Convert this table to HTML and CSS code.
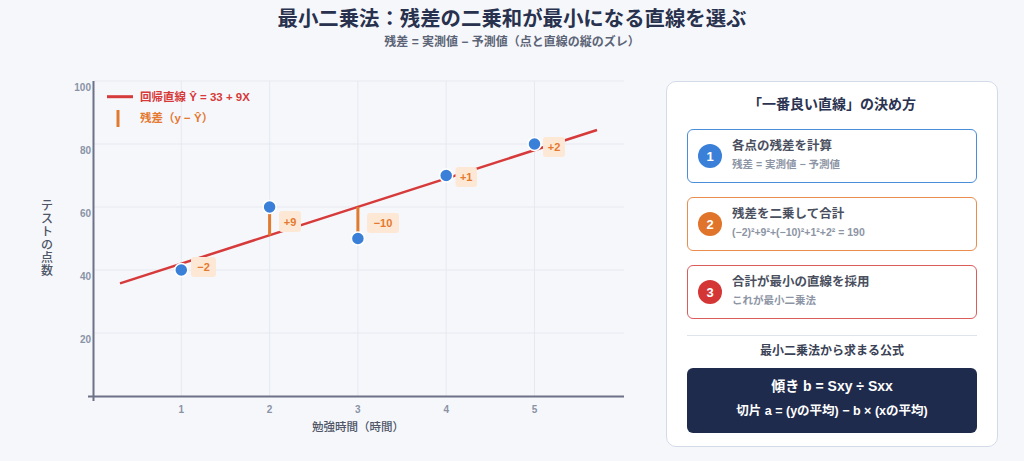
FILE: index.html
```html
<!DOCTYPE html>
<html lang="ja">
<head>
<meta charset="utf-8">
<title>最小二乗法</title>
<link rel="stylesheet" href="styles.css">
</head>
<body>
<header class="header">
  <h1 class="title">最小二乗法：残差の二乗和が最小になる直線を選ぶ</h1>
  <p class="subtitle">残差 = 実測値 − 予測値（点と直線の縦のズレ）</p>
</header>
<main class="main">
  <svg class="chart" width="626" height="390" viewBox="20 60 626 390" xmlns="http://www.w3.org/2000/svg">
    <g class="grid">
      <line x1="94" y1="81" x2="624" y2="81"/>
      <line x1="94" y1="144" x2="624" y2="144"/>
      <line x1="94" y1="207" x2="624" y2="207"/>
      <line x1="94" y1="270" x2="624" y2="270"/>
      <line x1="94" y1="333" x2="624" y2="333"/>
      <line x1="181.3" y1="81" x2="181.3" y2="396"/>
      <line x1="269.6" y1="81" x2="269.6" y2="396"/>
      <line x1="357.9" y1="81" x2="357.9" y2="396"/>
      <line x1="446.2" y1="81" x2="446.2" y2="396"/>
      <line x1="534.5" y1="81" x2="534.5" y2="396"/>
    </g>
    <g class="axis">
      <line x1="93.5" y1="81" x2="93.5" y2="401"/>
      <line x1="88" y1="396.5" x2="624" y2="396.5"/>
    </g>
    <g class="ytick">
      <text x="91" y="91">100</text>
      <text x="91" y="154">80</text>
      <text x="91" y="217">60</text>
      <text x="91" y="280">40</text>
      <text x="91" y="343">20</text>
    </g>
    <g class="xtick">
      <text x="181.3" y="413">1</text>
      <text x="269.6" y="413">2</text>
      <text x="357.9" y="413">3</text>
      <text x="446.2" y="413">4</text>
      <text x="534.5" y="413">5</text>
    </g>
    <text class="xtitle" x="358" y="430.5">勉強時間（時間）</text>
    <g class="ytitle">
      <text x="47" y="209.5">テ</text>
      <text x="47" y="222.5">ス</text>
      <text x="47" y="235.5">ト</text>
      <text x="47" y="248.5">の</text>
      <text x="47" y="261.5">点</text>
      <text x="47" y="274.5">数</text>
    </g>
    <line class="reg" x1="120" y1="283.4" x2="597" y2="130"/>
    <g class="resid">
      <line x1="181.3" y1="270" x2="181.3" y2="263.7"/>
      <line x1="269.6" y1="207" x2="269.6" y2="235.4"/>
      <line x1="357.9" y1="238.5" x2="357.9" y2="207"/>
      <line x1="446.2" y1="175.5" x2="446.2" y2="178.7"/>
      <line x1="534.5" y1="144" x2="534.5" y2="150"/>
    </g>
    <g class="dot">
      <circle cx="181.3" cy="270" r="6.5"/>
      <circle cx="269.6" cy="207" r="6.5"/>
      <circle cx="357.9" cy="238.5" r="6.5"/>
      <circle cx="446.2" cy="175.5" r="6.5"/>
      <circle cx="534.5" cy="144" r="6.5"/>
    </g>
    <g class="tag">
      <rect x="191" y="257" width="25" height="20" rx="3"/>
      <text x="203.5" y="271">−2</text>
      <rect x="279" y="211" width="22" height="21" rx="3"/>
      <text x="290" y="225.5">+9</text>
      <rect x="367" y="213" width="32" height="20" rx="3"/>
      <text x="383" y="227">−10</text>
      <rect x="455.5" y="167" width="21.5" height="20" rx="3"/>
      <text x="466.2" y="181">+1</text>
      <rect x="543" y="137" width="22" height="20" rx="3"/>
      <text x="554" y="151">+2</text>
    </g>
    <g class="legend">
      <line class="leg-reg" x1="107" y1="96.7" x2="133" y2="96.7"/>
      <text class="leg-reg-t" x="140" y="100.8">回帰直線 Ŷ = 33 + 9X</text>
      <line class="leg-res" x1="118" y1="110" x2="118" y2="127"/>
      <text class="leg-res-t" x="140" y="122">残差（y − Ŷ）</text>
    </g>
  </svg>

  <section class="panel">
    <h2 class="panel-title">「一番良い直線」の決め方</h2>
    <div class="steps">
      <div class="step step-blue">
        <div class="num">1</div>
        <div class="step-text">
          <div class="step-title">各点の残差を計算</div>
          <div class="step-sub">残差 = 実測値 − 予測値</div>
        </div>
      </div>
      <div class="step step-orange">
        <div class="num">2</div>
        <div class="step-text">
          <div class="step-title">残差を二乗して合計</div>
          <div class="step-sub">(−2)²+9²+(−10)²+1²+2² = 190</div>
        </div>
      </div>
      <div class="step step-red">
        <div class="num">3</div>
        <div class="step-text">
          <div class="step-title">合計が最小の直線を採用</div>
          <div class="step-sub">これが最小二乗法</div>
        </div>
      </div>
    </div>
    <div class="divider"></div>
    <h3 class="formula-title">最小二乗法から求まる公式</h3>
    <div class="formula">
      <div class="f1">傾き b = Sxy ÷ Sxx</div>
      <div class="f2">切片 a = (yの平均) − b × (xの平均)</div>
    </div>
  </section>
</main>
</body>
</html>
```

FILE: styles.css
```css
* { box-sizing: border-box; }
html, body { margin: 0; padding: 0; }
body {
  width: 1024px;
  height: 461px;
  overflow: hidden;
  background: #f6f7fb;
  font-family: "Liberation Sans", "Noto Sans CJK JP", sans-serif;
  color: #2a3350;
}
.header {
  height: 60px;
  text-align: center;
  padding-top: 7px;
}
.title {
  margin: 0;
  font-size: 20.4px;
  line-height: 24px;
  font-weight: 700;
  color: #28314d;
}
.subtitle {
  margin: 4px 0 0;
  font-size: 12px;
  line-height: 14px;
  font-weight: 700;
  color: #5b6476;
}
.main {
  display: flex;
  align-items: flex-start;
  padding-left: 20px;
}
.chart { display: block; flex: none; }
.grid line { stroke: #e6e9f0; stroke-width: 1; }
.axis line { stroke: #6c7386; stroke-width: 2; }
.ytick text {
  font-size: 10px; font-weight: 700; fill: #8a93a6; text-anchor: end;
}
.xtick text {
  font-size: 10px; font-weight: 700; fill: #8a93a6; text-anchor: middle;
}
.xtitle {
  font-size: 11.5px; font-weight: 500; fill: #4d5567; text-anchor: middle;
}
.ytitle text {
  font-size: 12px; font-weight: 500; fill: #4d5567; text-anchor: middle;
}
.reg { stroke: #d63a3a; stroke-width: 2.5; }
.resid line { stroke: #e07a2e; stroke-width: 3; }
.dot circle { fill: #3a80d8; stroke: #ffffff; stroke-width: 1.5; }
.tag rect { fill: #fde8d5; }
.tag text {
  font-size: 11px; font-weight: 700; fill: #e5792f; text-anchor: middle;
}
.leg-reg { stroke: #d63a3a; stroke-width: 3; }
.leg-res { stroke: #e07a2e; stroke-width: 3; }
.leg-reg-t { font-size: 11.5px; font-weight: 700; fill: #d63a3a; }
.leg-res-t { font-size: 11.5px; font-weight: 700; fill: #e5792f; }

.panel {
  flex: none;
  width: 332px;
  margin-top: 21px;
  margin-left: 20px;
  background: #ffffff;
  border: 1px solid #d4dbe8;
  border-radius: 10px;
  padding: 12px 20px 13px;
}
.panel-title {
  margin: 0;
  text-align: center;
  font-size: 14px;
  line-height: 20px;
  font-weight: 700;
  color: #2a3350;
}
.steps {
  margin-top: 15px;
  display: flex;
  flex-direction: column;
  gap: 14px;
}
.step {
  height: 54px;
  border: 1.5px solid;
  border-radius: 6px;
  display: flex;
  align-items: center;
  padding-left: 10px;
  gap: 10px;
  background: #ffffff;
}
.step-blue { border-color: #4a8ddb; }
.step-orange { border-color: #e98d4e; }
.step-red { border-color: #dc5b5b; }
.num {
  width: 24px;
  height: 24px;
  border-radius: 50%;
  color: #ffffff;
  font-size: 13px;
  font-weight: 700;
  display: flex;
  align-items: center;
  justify-content: center;
  flex: none;
}
.step-blue .num { background: #3a80d8; }
.step-orange .num { background: #e0742b; }
.step-red .num { background: #d43636; }
.step-text { padding-bottom: 4px; }
.step-title {
  font-size: 12.5px;
  line-height: 17px;
  font-weight: 700;
  color: #4a5060;
}
.step-sub {
  margin-top: 2px;
  font-size: 10.5px;
  line-height: 14px;
  font-weight: 700;
  color: #8d95a5;
}
.divider {
  margin-top: 16px;
  height: 1px;
  background: #dfe4ec;
}
.formula-title {
  margin: 7px 0 0;
  text-align: center;
  font-size: 12px;
  line-height: 16px;
  font-weight: 700;
  color: #3a4256;
}
.formula {
  margin-top: 9px;
  height: 65px;
  background: #1f2b4d;
  border-radius: 6px;
  padding-top: 9px;
  text-align: center;
  color: #ffffff;
  font-weight: 700;
}
.f1 { font-size: 14px; line-height: 18px; }
.f2 { margin-top: 8px; font-size: 12.5px; line-height: 16px; }
```
